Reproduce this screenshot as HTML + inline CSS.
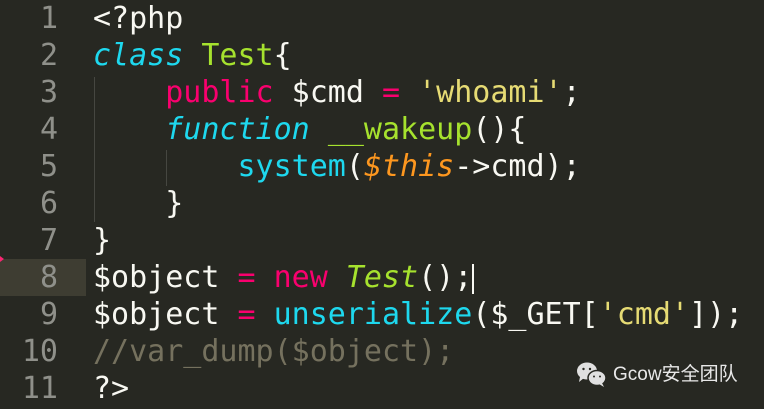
<!DOCTYPE html>
<html><head><meta charset="utf-8"><style>
body{margin:0;width:764px;height:409px;background:#272822;overflow:hidden;position:relative;font-family:"DejaVu Sans Mono","Liberation Mono",monospace;}
.l{position:absolute;left:0;width:764px;height:37px;line-height:37px;font-size:30px;white-space:pre;color:#f8f8f2}
.n{position:absolute;left:0;width:58px;text-align:right;color:#8f908a}
.c{position:absolute;left:93px}
.hl{position:absolute;left:0;top:259px;width:86px;height:37px;background:#3e3d32}
.k{color:#f9006e}.b{color:#1ed8ee}.i{font-style:italic}.g{color:#a6e22e}.s{color:#e6db74}.o{color:#fd971f}.cm{color:#75715e}
.gd{position:absolute;width:1px;background:#464741}
</style></head><body>
<div class="hl"></div>
<div class="gd" style="left:94px;top:77px;height:145px"></div>
<div class="gd" style="left:166px;top:150px;height:36px"></div>
<div style="position:absolute;left:0;top:256px;width:0;height:0;border-left:4px solid #f92672;border-top:3px solid transparent;border-bottom:3px solid transparent"></div>
<div class="l" style="top:0px"><span class="n">1</span><span class="c">&lt;?php</span></div>
<div class="l" style="top:37px"><span class="n">2</span><span class="c"><span class="b i">class</span> <span class="g">Test</span>{</span></div>
<div class="l" style="top:74px"><span class="n">3</span><span class="c">    <span class="k">public</span> $cmd <span class="k">=</span> <span class="s">'whoami'</span>;</span></div>
<div class="l" style="top:111px"><span class="n">4</span><span class="c">    <span class="b i">function</span> <span class="g">__wakeup</span>(){</span></div>
<div class="l" style="top:148px"><span class="n">5</span><span class="c">        <span class="b">system</span>(<span class="o i">$this</span>-&gt;cmd);</span></div>
<div class="l" style="top:185px"><span class="n">6</span><span class="c">    }</span></div>
<div class="l" style="top:222px"><span class="n">7</span><span class="c">}</span></div>
<div class="l" style="top:259px"><span class="n">8</span><span class="c">$object <span class="k">=</span> <span class="k">new</span> <span class="g i">Test</span>();<span style="display:inline-block;width:2px;height:30px;background:#f8f8f2;vertical-align:middle"></span></span></div>
<div class="l" style="top:296px"><span class="n">9</span><span class="c">$object <span class="k">=</span> <span class="b">unserialize</span>($_GET[<span class="s">'cmd'</span>]);</span></div>
<div class="l" style="top:333px"><span class="n">10</span><span class="c cm">//var_dump($object);</span></div>
<div class="l" style="top:370px"><span class="n">11</span><span class="c">?&gt;</span></div>
<svg style="position:absolute;left:576px;top:361px" width="32" height="28" viewBox="0 0 32 28">
<ellipse cx="11" cy="10" rx="10" ry="8.5" fill="#e0e0e0"/>
<path d="M4 16 L3 21 L8 17Z" fill="#e0e0e0"/>
<ellipse cx="21" cy="17" rx="9" ry="7.5" fill="#e0e0e0" stroke="#272822" stroke-width="1.5"/>
<path d="M26 22 L28 26 L23 23Z" fill="#e0e0e0"/>
<circle cx="7.5" cy="8" r="1.2" fill="#272822"/><circle cx="14" cy="8" r="1.2" fill="#272822"/>
<circle cx="18" cy="15.5" r="1" fill="#272822"/><circle cx="24" cy="15.5" r="1" fill="#272822"/>
</svg>
<div style="position:absolute;left:613px;top:364px;font-size:19px;line-height:22px;color:#e8e8e8;font-family:'Liberation Sans','Noto Sans CJK SC',sans-serif">Gcow安全团队</div>
</body></html>
